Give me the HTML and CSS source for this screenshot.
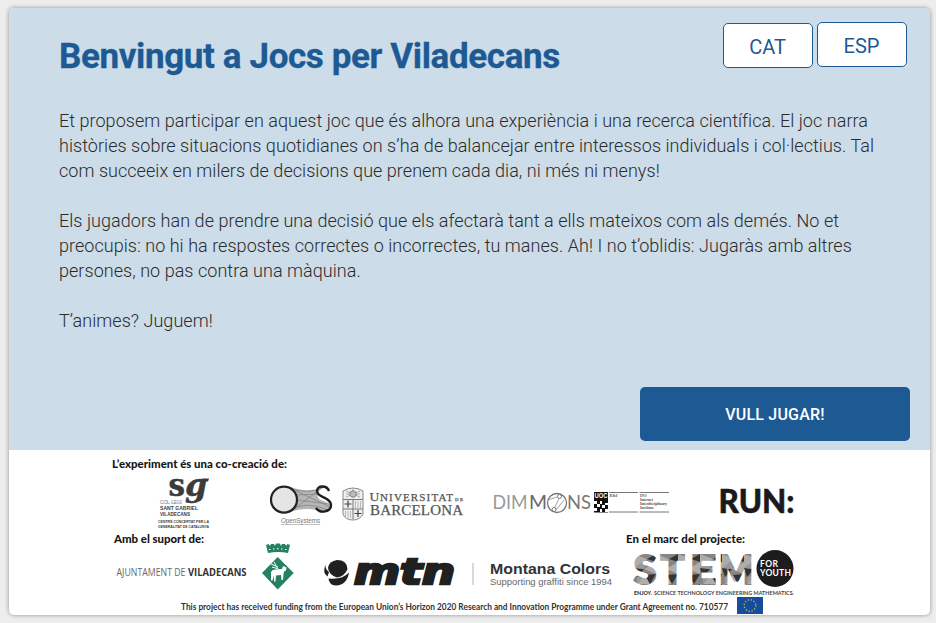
FILE: index.html
```html
<!DOCTYPE html>
<html lang="ca">
<head>
<meta charset="utf-8">
<title>Jocs per Viladecans</title>
<link rel="stylesheet" href="styles.css">
</head>
<body>
<main class="card">
  <section class="intro">
    <header class="top">
      <h1>Benvingut a Jocs per Viladecans</h1>
      <nav class="langs">
        <button class="lang active">CAT</button>
        <button class="lang">ESP</button>
      </nav>
    </header>
    <div class="copy">
      <p>Et proposem participar en aquest joc que és alhora una experiència i una recerca científica. El joc narra<br>històries sobre situacions quotidianes on s’ha de balancejar entre interessos individuals i col·lectius. Tal<br>com succeeix en milers de decisions que prenem cada dia, ni més ni menys!</p>
      <p>Els jugadors han de prendre una decisió que els afectarà tant a ells mateixos com als demés. No et<br>preocupis: no hi ha respostes correctes o incorrectes, tu manes. Ah! I no t’oblidis: Jugaràs amb altres<br>persones, no pas contra una màquina.</p>
      <p>T’animes? Juguem!</p>
    </div>
    <button class="play">VULL JUGAR!</button>
  </section>

  <footer class="partners">
    <div class="heads heads-first"><h2><svg width="180" height="14" viewBox="110 457 180 14"><text x="112" y="468" textLength="175" lengthAdjust="spacingAndGlyphs">L’experiment és una co-creació de:</text></svg></h2></div>

    <div class="logos creators">
      <svg width="70" height="58" viewBox="150 474 70 58" fill="#3b3b3b">
        <g class="slab" font-size="31" stroke="#3b3b3b" stroke-width=".5">
          <text x="168.500" y="496" textLength="16.500" lengthAdjust="spacingAndGlyphs">s</text>
          <text x="185" y="496" font-style="italic" textLength="22" lengthAdjust="spacingAndGlyphs">g</text>
        </g>
        <path d="M202 478.500h7l-1 3h-6z"/>
        <g class="sans" font-size="5">
          <text x="160" y="504" fill="#777" textLength="22">COL·LEGI</text>
          <text x="160" y="510" font-weight="700" textLength="38">SANT GABRIEL</text>
          <text x="160" y="516" font-weight="700" textLength="30" lengthAdjust="spacingAndGlyphs">VILADECANS</text>
          <text x="158" y="523.300" font-size="3.700" font-weight="700" textLength="51" lengthAdjust="spacingAndGlyphs">CENTRE CONCERTAT PER LA</text>
          <text x="158" y="527.700" font-size="3.700" font-weight="700" textLength="51" lengthAdjust="spacingAndGlyphs">GENERALITAT DE CATALUNYA</text>
        </g>
      </svg>
      <svg width="70" height="58" viewBox="265 474 70 58">
        <path d="M288 487Q305 492 318 489L325 486Q314 492 319 499L330 504Q329 514 317 510Q303 507 290 512L298 500Z" fill="#b5b5b5"/>
        <path d="M289 487Q307 496 324 487M290 512L322 488M292 489L330 507M297 500L329 504M290 511Q304 500 328 510M297 495L319 494" fill="none" stroke="#777" stroke-width=".6"/>
        <circle cx="284" cy="499.700" r="13" fill="#e5e5e5" stroke="#222" stroke-width="2.200"/>
        <path d="M329 491C327 485 317 485 317 491C317 498 331 497 331 505C331 512 320 514 316 508" fill="none" stroke="#1d1d1d" stroke-width="2.400"/>
        <text class="sans" x="281" y="523" font-size="6.800" fill="#777" textLength="39" lengthAdjust="spacingAndGlyphs">OpenSystems</text>
        <path d="M281 524.500h39" stroke="#999" stroke-width=".6"/>
      </svg>
      <svg width="130" height="58" viewBox="338 474 130 58">
        <path d="M343 491Q353 485 363 491V514Q360 520 353 520Q345 520 343 514Z" fill="#eee" stroke="#888"/>
        <path d="M343 499.500h20M343 509h20M353 499.500V519" stroke="#777" fill="none"/>
        <path d="M346 491l14 6M360 491l-14 6M353 489v9M346 494h14" stroke="#999" stroke-width=".8"/>
        <circle cx="353" cy="494" r="3.200" fill="#bbb" stroke="#777" stroke-width=".8"/>
        <path d="M348 500.500v7M344.500 504h7M358 510v7M354.500 513.500h7" stroke="#444" stroke-width="1.200"/>
        <path d="M355.500 501v7M358 501v7M360.500 501v7M345.500 511v7M348 511v7M350.500 511v7" stroke="#aaa" stroke-width=".8"/>
        <g class="serif" fill="#555" stroke="#555" stroke-width=".25">
          <text x="369.500" y="500.500" font-size="13.500">U</text>
          <text x="380" y="500.500" font-size="11" textLength="73" lengthAdjust="spacing">NIVERSITAT</text>
          <text x="455" y="500.500" font-size="5" textLength="8">DE</text>
          <text x="370" y="514.500" font-size="15" textLength="93">BARCELONA</text>
        </g>
      </svg>
      <svg width="185" height="58" viewBox="488 474 185 58">
        <g class="lato" font-size="19">
          <text x="492.500" y="509" fill="#999" textLength="35" lengthAdjust="spacingAndGlyphs">DIM</text>
          <text x="529" y="509" fill="#666" textLength="18" lengthAdjust="spacingAndGlyphs">M</text>
          <text x="567" y="509" fill="#777" textLength="24" lengthAdjust="spacingAndGlyphs">NS</text>
        </g>
        <circle cx="557" cy="503" r="9.500" fill="none" stroke="#777" stroke-width="1.300"/>
        <path d="M559 498.500L554.500 508M548 500L557 497M556 510L564 500" stroke="#888" fill="none" stroke-width=".8"/>
        <circle cx="559.500" cy="496.500" r="2" fill="#fff" stroke="#777"/><circle cx="554" cy="509.500" r="2" fill="#fff" stroke="#777"/>
        <path d="M594 492h14v20.500h-14z" fill="#111"/>
        <text class="sans" x="594.500" y="498" font-size="7" font-weight="700" fill="#fff" textLength="13" lengthAdjust="spacingAndGlyphs">UOC</text>
        <path d="M594 501h3v3h-3zM600 501h2v3h-2zM605 503h3v2h-3zM597 504h3v3h-3zM602 505h3v3h-3zM594 508h3v3h-3zM600 509h2v3h-2zM605 509h3v3h-3z" fill="#fff"/>
        <path d="M609 492.500h29M639.500 492.500H669M609 512h29M639.500 512H669" stroke="#777"/>
        <g class="serif" fill="#555" font-size="4" font-weight="700">
          <text x="609.500" y="497">R&amp;I</text><text x="640" y="497">IN3</text>
          <text x="640" y="501" textLength="13">Internet</text><text x="640" y="505" textLength="27">Interdisciplinary</text><text x="640" y="509" textLength="14">Institute</text>
        </g>
      </svg>
      <svg width="85" height="58" viewBox="715 474 85 58">
        <text class="lato" x="718.500" y="513" font-size="32" font-weight="900" fill="#1b191c" stroke="#1b191c" stroke-width=".5" textLength="76" lengthAdjust="spacingAndGlyphs">RUN:</text>
      </svg>
    </div>

    <div class="heads heads-second">
      <h2><svg width="95" height="14" viewBox="112 532 95 14"><text x="114" y="543" textLength="90" lengthAdjust="spacingAndGlyphs">Amb el suport de:</text></svg></h2>
      <h2><svg width="125" height="14" viewBox="624 532 125 14"><text x="626" y="543" textLength="119" lengthAdjust="spacingAndGlyphs">En el marc del projecte:</text></svg></h2>
    </div>

    <div class="logos supporters">
      <svg width="185" height="51" viewBox="112 546 185 51">
        <text class="condensed" x="116.500" y="576" font-size="10.500" fill="#666" textLength="69" lengthAdjust="spacingAndGlyphs">AJUNTAMENT DE</text>
        <text class="condensed" x="188" y="576" font-size="10.500" font-weight="700" fill="#333" textLength="58.500" lengthAdjust="spacingAndGlyphs">VILADECANS</text>
        <g fill="#268062">
          <path d="M266 545l2.500-1 1.500 2 1-2h3l1 2 1-2.500h4l1 2.500 1-2h3l1 2 1.500-2 2.500 1-2 8q-10-2-20 0z"/>
          <path d="M277.700 557L293.700 573 277.700 589.500 262 573Z"/>
        </g>
        <path d="M269 549.500h1.500M273 549h1.500M277 548.700h1.500M281 549h1.500M285 549.500h1.500" stroke="#fff"/>
        <path d="M271 572q1-3 5-2.500l6-.5 1-3 3.500 1.500-.5 3-2 1-.5 2.500-.5 6h-1.500l-.5-5-5 .5-.5 6h-1.500v-6l-1.500 5h-1.500z" fill="#fff"/>
        <path d="M271 564l7 3M272 567l5 1.500M274 562l5 9" stroke="#fff"/>
      </svg>
      <svg width="140" height="51" viewBox="320 546 140 51" fill="#202020">
        <path d="M328 568Q329 561 337 560Q347 560 347.500 569Q345 576 337 577.500Q329 575 328 568Z"/>
        <path d="M325.500 564.500Q322 573 327.500 576.500L329 572Q325 569 325.500 564.500ZM328.500 578.500Q342 580 349 572.500Q347 585 336 585.500Q329 585 328.500 578.500Z"/>
        <g class="wide" font-size="35" stroke="#202020" stroke-width="2.500">
          <text x="354" y="584" textLength="46" lengthAdjust="spacingAndGlyphs">m</text>
          <text x="400" y="584" textLength="22" lengthAdjust="spacingAndGlyphs">t</text>
          <text x="422" y="584" textLength="33" lengthAdjust="spacingAndGlyphs">n</text>
        </g>
      </svg>
      <svg width="145" height="51" viewBox="470 546 145 51">
        <path d="M473 563v22" stroke="#ccc" stroke-width="1.500"/>
        <text class="sans" x="490" y="574" font-size="14.500" font-weight="700" fill="#333" textLength="120" lengthAdjust="spacingAndGlyphs">Montana Colors</text>
        <text class="sans" x="490" y="585" font-size="9" fill="#666" textLength="122" lengthAdjust="spacingAndGlyphs">Supporting graffiti since 1994</text>
      </svg>
      <svg width="165" height="51" viewBox="632 546 165 51">
        <defs>
          <pattern id="facets" x="634" y="554" width="22" height="30" patternUnits="userSpaceOnUse">
            <path d="M0 0h22v30H0z" fill="#858585"/>
            <path d="M0 0L13 5 0 14zM22 8L10 15 22 20zM3 30L11 21 16 30z" fill="#adadad"/>
            <path d="M13 5L22 0v8zM0 14L10 15 3 23zM11 21L22 20 16 30z" fill="#343434"/>
            <path d="M13 5L10 15 0 14zM3 23L11 21 3 30z" fill="#999"/>
          </pattern>
        </defs>
        <g class="lato" font-size="40" font-weight="900" fill="url(#facets)" stroke="url(#facets)" stroke-width="2">
          <text x="633.500" y="583.500" textLength="23" lengthAdjust="spacingAndGlyphs">S</text>
          <text x="660.500" y="583.500" textLength="24" lengthAdjust="spacingAndGlyphs">T</text>
          <text x="690" y="583.500" textLength="26" lengthAdjust="spacingAndGlyphs">E</text>
          <text x="719" y="583.500" textLength="34" lengthAdjust="spacingAndGlyphs">M</text>
        </g>
        <circle cx="775" cy="568.500" r="18.500" fill="#1c1b1e"/>
        <text class="lato" x="760" y="567" font-size="8.500" font-weight="700" fill="#fff" textLength="18">FOR</text>
        <text class="lato" x="760" y="575.500" font-size="8.500" font-weight="700" fill="#fff" textLength="31">YOUTH</text>
        <text class="lato" x="634" y="594.500" font-size="5" font-weight="900" fill="#333" textLength="18" lengthAdjust="spacingAndGlyphs">ENJOY.</text>
        <text class="lato" x="654" y="594.500" font-size="5" font-weight="700" fill="#444" textLength="140" lengthAdjust="spacingAndGlyphs">SCIENCE TECHNOLOGY ENGINEERING MATHEMATICS.</text>
      </svg>
    </div>

    <div class="funding">
      <svg width="552" height="18" viewBox="179 597 552 18"><text class="note" x="181" y="609.500" textLength="547" lengthAdjust="spacingAndGlyphs">This project has received funding from the European Union’s Horizon 2020 Research and Innovation Programme under Grant Agreement no. 710577</text></svg>
      <svg width="26" height="17" viewBox="0 0 26 17"><path d="M0 0h26v17H0z" fill="#174c9c"/><circle cx="13" cy="8.500" r="5.800" fill="none" stroke="#b7b957" stroke-width="1.300" stroke-dasharray="1.300 1.737"/></svg>
    </div>
  </footer>
</main>
</body>
</html>
```
FILE: styles.css
```css
* { box-sizing: border-box; }

body {
  margin: 0;
  padding: 8px 6px 8px 9px;
  background: #ededed;
  color: #2b2b2b;
  font-family: Roboto, "Liberation Sans", sans-serif;
}

.card {
  height: 607px;
  background: #fff;
  border-radius: 5px;
  box-shadow: 0 0 4px rgba(0, 0, 0, .4);
  overflow: hidden;
}

.intro {
  display: flex;
  flex-direction: column;
  height: 442px;
  padding: 14px 20px 9px 50px;
  background: #ccdce8;
}

.top {
  display: flex;
  justify-content: space-between;
  align-items: flex-start;
  padding-right: 3px;
}

h1 {
  margin: 14px 0 0;
  color: #1d5a94;
  font-size: 35px;
  line-height: 42px;
  font-weight: 700;
  letter-spacing: -.38px;
  white-space: nowrap;
  -webkit-text-stroke: .3px #1d5a94;
}

.langs { display: flex; gap: 4px; }

.lang {
  width: 90px;
  height: 45px;
  padding: 2px 1px 0 0;
  border: 1px solid #1d5a94;
  border-radius: 5px;
  background: #fff;
  color: #1d5a94;
  font: 400 20px Roboto, sans-serif;
}

.lang.active { margin-top: 1px; }

.copy { margin-top: 30px; }

.copy p {
  margin: 0 0 25px;
  font-size: 18px;
  line-height: 25px;
  font-weight: 300;
  letter-spacing: .04px;
  white-space: nowrap;
}

.play {
  align-self: flex-end;
  width: 270px;
  height: 54px;
  margin-top: auto;
  border: 0;
  border-radius: 5px;
  background: #1d5a94;
  color: #fff;
  font: 500 16px Roboto, sans-serif;
  letter-spacing: .2px;
}

.partners { padding-top: 7px; }
.partners svg { display: block; flex: none; overflow: visible; }

.heads { display: flex; height: 14px; }
.heads-first { padding-left: 101px; }
.heads-second { padding-left: 103px; gap: 417px; }

h2 {
  margin: 0;
  font: 900 11.5px Lato, sans-serif;
  fill: #171717;
}

.logos { display: grid; }

.creators {
  margin-top: 3px;
  height: 58px;
  padding-left: 141px;
  grid-template-columns: 115px 73px 150px 227px 85px;
}

.supporters {
  height: 51px;
  padding-left: 103px;
  grid-template-columns: 208px 150px 162px 165px;
}

.funding {
  display: flex;
  gap: 6px;
  padding-left: 170px;
}

.sans { font-family: "Liberation Sans", sans-serif; }
.serif { font-family: "Liberation Serif", serif; }
.slab { font-family: "DejaVu Serif", serif; font-weight: 700; }
.wide { font-family: "DejaVu Sans", sans-serif; font-weight: 700; font-style: oblique; }
.lato { font-family: Lato, sans-serif; }
.condensed { font-family: "Open Sans", sans-serif; }
.note { font: 700 10px Lato, sans-serif; fill: #333; }
```
